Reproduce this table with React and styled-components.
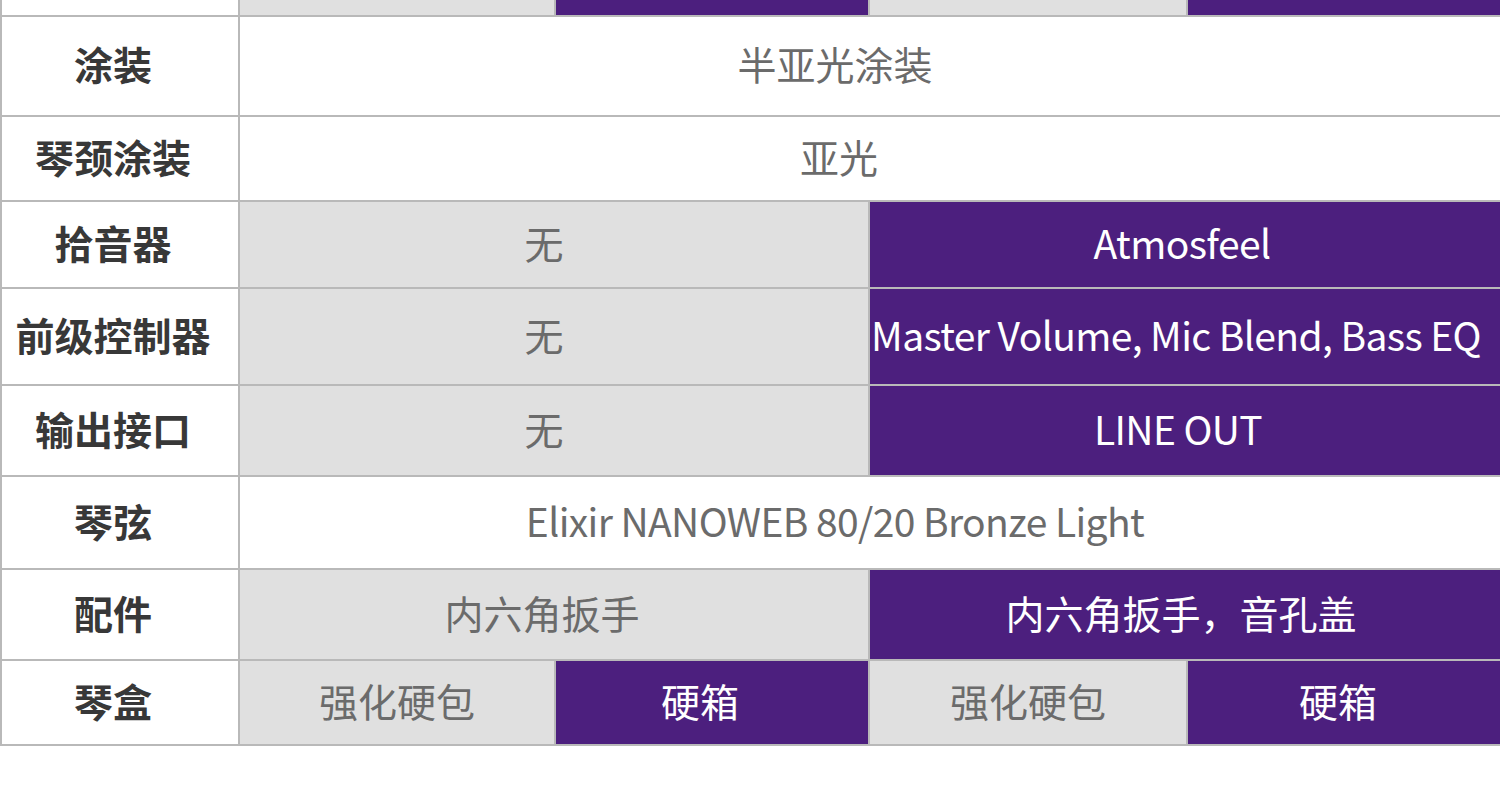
import React from "react";
import styled, { createGlobalStyle } from "styled-components";

const Global = createGlobalStyle`
  html, body { margin: 0; padding: 0; background: #ffffff; }
  body { font-family: "Noto Sans CJK SC", "Noto Sans", sans-serif; }
`;

const Page = styled.div`
  width: 1500px;
  height: 806px;
  background: #ffffff;
  overflow: hidden;
`;

const Table = styled.div`
  display: grid;
  grid-template-columns: 236px 314px 312px 316px 312px;
  grid-template-rows: 15px 98px 83px 85px 95px 89px 91px 89px 83px;
  gap: 2px;
  padding: 0 2px 2px 2px;
  width: 1500px;
  box-sizing: border-box;
  background: #b9b9b9;
`;

const Label = styled.div`
  background: #ffffff;
  color: #383838;
  font-weight: 700;
  font-size: 39px;
  display: flex;
  align-items: center;
  justify-content: center;
  padding-right: 14px;
  padding-bottom: 6px;
  white-space: nowrap;
  overflow: hidden;
`;

const tones = {
  white: { bg: "#ffffff", fg: "#6b6b6b" },
  gray: { bg: "#e0e0e0", fg: "#6b6b6b" },
  purple: { bg: "#4c1f7e", fg: "#ffffff" },
};

const Cell = styled.div`
  grid-column: span ${(p) => p.$span || 1};
  background: ${(p) => tones[p.$tone].bg};
  color: ${(p) => tones[p.$tone].fg};
  font-size: 39px;
  font-weight: 400;
  letter-spacing: ${(p) => (p.$tight ? "-0.6px" : "0")};
  display: flex;
  align-items: center;
  justify-content: center;
  padding-right: ${(p) => p.$shift || 0}px;
  padding-bottom: 6px;
  white-space: nowrap;
  overflow: hidden;
`;

const rows = [
  { label: "", cells: [["", "gray", 1], ["", "purple", 1], ["", "gray", 1], ["", "purple", 1]] },
  { label: "涂装", cells: [["半亚光涂装", "white", 4, 70]] },
  { label: "琴颈涂装", cells: [["亚光", "white", 4, 62]] },
  { label: "拾音器", cells: [["无", "gray", 2, 20], ["Atmosfeel", "purple", 2, 6, true]] },
  { label: "前级控制器", cells: [["无", "gray", 2, 20], ["Master Volume, Mic Blend, Bass EQ", "purple", 2, 18, true]] },
  { label: "输出接口", cells: [["无", "gray", 2, 20], ["LINE OUT", "purple", 2, 14, true]] },
  { label: "琴弦", cells: [["Elixir NANOWEB 80/20 Bronze Light", "white", 4, 70, true]] },
  { label: "配件", cells: [["内六角扳手", "gray", 2, 24], ["内六角扳手，音孔盖", "purple", 2, 8]] },
  { label: "琴盒", cells: [["强化硬包", "gray", 1, 0], ["硬箱", "purple", 1, 24], ["强化硬包", "gray", 1, 0], ["硬箱", "purple", 1, 12]] },
];

export default function App() {
  return (
    <Page>
      <Global />
      <Table>
        {rows.map((r, i) => (
          <React.Fragment key={i}>
            <Label>{r.label}</Label>
            {r.cells.map(([text, tone, span, shift, tight], j) => (
              <Cell key={j} $tone={tone} $span={span} $shift={shift} $tight={tight}>
                {text}
              </Cell>
            ))}
          </React.Fragment>
        ))}
      </Table>
    </Page>
  );
}
